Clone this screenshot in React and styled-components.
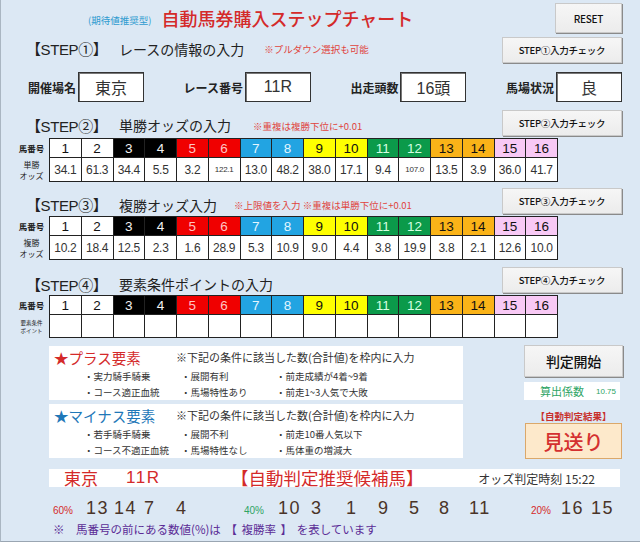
import React from "react";
import styled, { createGlobalStyle } from "styled-components";

const JP = `"Noto Sans CJK JP", "Noto Sans", sans-serif`;
const NUM = `"Liberation Sans", Arial, "Noto Sans CJK JP", sans-serif`;

const GlobalStyle = createGlobalStyle`
  html, body { margin: 0; padding: 0; background: #dce8f4; }
  * { box-sizing: border-box; }
`;

const FRAMES = {
  white: { bg: "#ffffff", fg: "#111111" },
  black: { bg: "#000000", fg: "#f2f2f2" },
  red: { bg: "#f00000", fg: "#ffc4c4" },
  blue: { bg: "#22a4e2", fg: "#e4f6ff" },
  yellow: { bg: "#ffff00", fg: "#111111" },
  green: { bg: "#0b9a4a", fg: "#d6ffe2" },
  orange: { bg: "#fab318", fg: "#111111" },
  pink: { bg: "#f8c9f5", fg: "#111111" },
};
const frameOf = ["white", "black", "red", "blue", "yellow", "green", "orange", "pink"];
const horses = Array.from({ length: 16 }, (_, i) => ({ no: i + 1, frame: frameOf[Math.floor(i / 2)] }));

const winOdds = ["34.1", "61.3", "34.4", "5.5", "3.2", "122.1", "13.0", "48.2", "38.0", "17.1", "9.4", "107.0", "13.5", "3.9", "36.0", "41.7"];
const placeOdds = ["10.2", "18.4", "12.5", "2.3", "1.6", "28.9", "5.3", "10.9", "9.0", "4.4", "3.8", "19.9", "3.8", "2.1", "12.6", "10.0"];

const Page = styled.div`
  width: 640px;
  height: 542px;
  background: #dce8f4;
  border-left: 1px solid #aab6c2;
  border-bottom: 1px solid #9aa6b2;
  font-family: ${JP};
  color: #222;
  overflow: hidden;
`;

const Header = styled.div`
  display: flex;
  align-items: center;
  height: 30px;
  margin-top: 3px;
  padding: 0 18px 0 87px;
`;

const SubTitle = styled.span`
  font-size: 9.5px;
  color: #2f9bd0;
  margin-right: 10px;
  margin-top: 3px;
`;

const Title = styled.h1`
  margin: 0;
  font-size: 18px;
  font-weight: 500;
  color: #d42a2a;
  flex: 1;
`;

const Button = styled.button`
  width: ${(p) => p.$w || 120}px;
  height: ${(p) => p.$h || 26}px;
  flex-shrink: 0;
  background: linear-gradient(#f6f6f6, #ececec);
  border: 1px solid #c9c9c9;
  box-shadow: 1px 1px 0 #8a8a8a;
  font-family: ${JP};
  font-size: ${(p) => p.$fs || 9.5}px;
  font-weight: ${(p) => p.$fw || 500};
  color: #111;
  padding: 0;
  letter-spacing: -0.3px;
`;

const StepHead = styled.div`
  display: flex;
  align-items: center;
  height: ${(p) => p.$h}px;
  margin-top: ${(p) => p.$mt}px;
  padding: 0 18px 0 25px;
`;

const StepLabel = styled.span`
  width: 93px;
  font-size: 15px;
  font-family: ${NUM};
  letter-spacing: -0.4px;
  margin-top: ${(p) => p.$off || 0}px;
`;

const StepTitle = styled.span`
  font-size: 14px;
  margin-top: ${(p) => p.$off || 0}px;
`;

const StepNote = styled.span`
  font-size: 9.5px;
  color: #e0443c;
  margin-left: ${(p) => p.$ml}px;
  margin-top: ${(p) => (p.$off || 0) + 1}px;
  flex: 1;
`;

const InputRow = styled.div`
  display: flex;
  justify-content: space-between;
  align-items: center;
  height: 30px;
  margin-top: 9px;
  padding: 0 18px 0 27px;
`;

const Field = styled.div`
  display: flex;
  align-items: center;
  gap: 2px;
`;

const FieldLabel = styled.span`
  font-size: 12px;
  font-weight: 700;
  color: #222;
`;

const ValueBox = styled.div`
  width: 66px;
  height: 30px;
  background: #fff;
  border: 1px solid #333;
  box-shadow: inset 1px 1px 0 #777;
  display: flex;
  align-items: center;
  justify-content: center;
  font-size: 16px;
  font-family: ${NUM};
  color: #333;
`;

const TableWrap = styled.div`
  display: flex;
  margin-top: ${(p) => p.$mt}px;
  padding-left: 15px;
`;

const LabelCol = styled.div`
  width: 33px;
  padding-right: 2px;
  display: grid;
  grid-template-rows: 20px ${(p) => p.$rh}px;
`;

const RowLabel = styled.div`
  display: flex;
  flex-direction: column;
  align-items: center;
  justify-content: center;
  text-align: center;
  font-size: ${(p) => p.$fs || 8}px;
  font-weight: ${(p) => p.$fw || 400};
  line-height: ${(p) => p.$lh || 11}px;
  color: #222;
  white-space: nowrap;
`;

const Grid = styled.div`
  width: 509px;
  display: grid;
  grid-template-columns: repeat(16, 1fr);
  grid-template-rows: 19px ${(p) => p.$rh}px;
  border-left: 1px solid #222;
  border-top: 1px solid #222;
`;

const NumCell = styled.div`
  background: ${(p) => FRAMES[p.$frame].bg};
  color: ${(p) => FRAMES[p.$frame].fg};
  border-right: 1px solid #222;
  border-bottom: 1px solid #222;
  display: flex;
  align-items: center;
  justify-content: center;
  font-family: ${NUM};
  font-size: 13.5px;
`;

const OddsCell = styled.div`
  background: #fff;
  border-right: 1px solid #222;
  border-bottom: 1px solid #222;
  display: flex;
  align-items: center;
  justify-content: center;
  font-family: ${NUM};
  font-size: ${(p) => (p.$small ? 8 : 12)}px;
  color: #333;
  letter-spacing: -0.3px;
`;

const Lower = styled.div`
  display: flex;
  margin-top: 7px;
  padding: 0 17px 0 48px;
  justify-content: space-between;
`;

const Panels = styled.div`
  display: flex;
  flex-direction: column;
  gap: 4px;
  padding-top: 1px;
`;

const Panel = styled.div`
  width: 414px;
  height: 54px;
  background: #fff;
  padding: 1px 0 0 5px;
`;

const PanelHead = styled.div`
  display: flex;
  align-items: center;
  height: 20px;
`;

const PanelTitle = styled.span`
  width: 122px;
  font-size: 14.5px;
  color: ${(p) => p.$color};
`;

const PanelNote = styled.span`
  font-size: 11px;
  color: #333;
`;

const ItemGrid = styled.div`
  display: grid;
  grid-template-columns: 97px 95px 1fr;
  grid-auto-rows: 16px;
  padding-left: 30px;
  margin-top: 1px;
`;

const Item = styled.span`
  font-size: 9.5px;
  color: #333;
  display: flex;
  align-items: center;
`;

const Side = styled.div`
  width: 99px;
  display: flex;
  flex-direction: column;
  align-items: flex-start;
`;

const CoefBox = styled.div`
  width: 96px;
  height: 18px;
  margin-top: 5px;
  background: #fff;
  display: flex;
  align-items: center;
  padding-left: 16px;
  gap: 12px;
  color: #2ea464;
`;

const CoefLabel = styled.span`
  font-size: 11px;
`;

const CoefValue = styled.span`
  font-size: 8px;
  font-family: ${NUM};
`;

const ResultLabel = styled.div`
  width: 100%;
  text-align: center;
  font-size: 9.5px;
  font-weight: 700;
  color: #c8302c;
  margin-top: 10px;
  line-height: 12px;
`;

const ResultBox = styled.div`
  width: 97px;
  height: 36px;
  margin-top: 1px;
  margin-left: 1px;
  background: #fde9cb;
  border: 1px solid #dba86a;
  display: flex;
  align-items: center;
  justify-content: center;
  font-size: 20px;
  font-weight: 500;
  color: #d43030;
`;

const Banner = styled.div`
  display: flex;
  align-items: center;
  height: 18px;
  margin: 10px 20px 0 48px;
  background: #fff;
  padding-left: 15px;
`;

const BannerRed = styled.span`
  font-size: ${(p) => p.$fs}px;
  color: #d42a2a;
  font-family: ${(p) => (p.$num ? NUM : JP)};
  width: ${(p) => (p.$w ? `${p.$w}px` : "auto")};
  line-height: 18px;
  letter-spacing: ${(p) => (p.$num ? "1.5px" : "0")};
`;

const BannerTime = styled.span`
  margin-left: auto;
  margin-right: 25px;
  font-size: 12px;
  color: #333;
`;

const Picks = styled.div`
  display: flex;
  align-items: baseline;
  height: 22px;
  line-height: 22px;
  margin-top: 10px;
  padding-left: 52px;
`;

const Rate = styled.span`
  font-family: ${NUM};
  font-size: 10px;
  color: ${(p) => p.$color};
  width: ${(p) => p.$w}px;
`;

const Pick = styled.span`
  font-family: ${NUM};
  font-size: 18px;
  letter-spacing: 1.5px;
  color: #4a3428;
  width: ${(p) => p.$w || 31.5}px;
`;

const Note = styled.div`
  font-size: 11.5px;
  color: #5b2c96;
  padding-left: 52px;
  margin-top: 2px;
  line-height: 16px;
  word-spacing: 2px;
`;

const OddsTable = ({ mt, rh, label, values, tinyLabel }) => (
  <TableWrap $mt={mt}>
    <LabelCol $rh={rh}>
      <RowLabel $fs={8.5} $fw={700}>馬番号</RowLabel>
      <RowLabel $fs={tinyLabel ? 5.5 : 8} $lh={tinyLabel ? 8 : 11}>
        {label.map((line) => (
          <span key={line}>{line}</span>
        ))}
      </RowLabel>
    </LabelCol>
    <Grid $rh={rh}>
      {horses.map((h) => (
        <NumCell key={`n${h.no}`} $frame={h.frame}>
          {h.no}
        </NumCell>
      ))}
      {horses.map((h, i) => (
        <OddsCell key={`o${h.no}`} $small={values && values[i].length > 4}>
          {values ? values[i] : ""}
        </OddsCell>
      ))}
    </Grid>
  </TableWrap>
);

const App = () => {
  return (
    <Page>
      <GlobalStyle />
      <Header>
        <SubTitle>(期待値推奨型)</SubTitle>
        <Title>自動馬券購入ステップチャート</Title>
        <Button $w={67} $h={30} $fs={10}>RESET</Button>
      </Header>

      <StepHead $mt={4} $h={26}>
        <StepLabel $off={-3}>【STEP①】</StepLabel>
        <StepTitle $off={-3}>レースの情報の入力</StepTitle>
        <StepNote $ml={20} $off={-3}>※プルダウン選択も可能</StepNote>
        <Button>STEP①入力チェック</Button>
      </StepHead>

      <InputRow>
        <Field>
          <FieldLabel>開催場名</FieldLabel>
          <ValueBox>東京</ValueBox>
        </Field>
        <Field>
          <FieldLabel>レース番号</FieldLabel>
          <ValueBox>11R</ValueBox>
        </Field>
        <Field>
          <FieldLabel>出走頭数</FieldLabel>
          <ValueBox>16頭</ValueBox>
        </Field>
        <Field>
          <FieldLabel>馬場状況</FieldLabel>
          <ValueBox>良</ValueBox>
        </Field>
      </InputRow>

      <StepHead $mt={8} $h={26}>
        <StepLabel $off={4}>【STEP②】</StepLabel>
        <StepTitle $off={4}>単勝オッズの入力</StepTitle>
        <StepNote $ml={22} $off={4}>※重複は複勝下位に+0.01</StepNote>
        <Button>STEP②入力チェック</Button>
      </StepHead>
      <OddsTable mt={2} rh={24} label={["単勝", "オッズ"]} values={winOdds} />

      <StepHead $mt={7} $h={24}>
        <StepLabel $off={7}>【STEP③】</StepLabel>
        <StepTitle $off={7}>複勝オッズ入力</StepTitle>
        <StepNote $ml={17} $off={7}>※上限値を入力 ※重複は単勝下位に+0.01</StepNote>
        <Button>STEP③入力チェック</Button>
      </StepHead>
      <OddsTable mt={3} rh={24} label={["複勝", "オッズ"]} values={placeOdds} />

      <StepHead $mt={6} $h={27}>
        <StepLabel $off={9}>【STEP④】</StepLabel>
        <StepTitle $off={9}>要素条件ポイントの入力</StepTitle>
        <StepNote $ml={0} />
        <Button>STEP④入力チェック</Button>
      </StepHead>
      <OddsTable mt={2} rh={23} label={["要素条件", "ポイント"]} tinyLabel />

      <Lower>
        <Panels>
          <Panel>
            <PanelHead>
              <PanelTitle $color="#d42a2a">★プラス要素</PanelTitle>
              <PanelNote>※下記の条件に該当した数(合計値)を枠内に入力</PanelNote>
            </PanelHead>
            <ItemGrid>
              <Item>・実力騎手騎乗</Item>
              <Item>・展開有利</Item>
              <Item>・前走成績が4着~9着</Item>
              <Item>・コース適正血統</Item>
              <Item>・馬場特性あり</Item>
              <Item>・前走1~3人気で大敗</Item>
            </ItemGrid>
          </Panel>
          <Panel>
            <PanelHead>
              <PanelTitle $color="#1f78b8">★マイナス要素</PanelTitle>
              <PanelNote>※下記の条件に該当した数(合計値)を枠内に入力</PanelNote>
            </PanelHead>
            <ItemGrid>
              <Item>・若手騎手騎乗</Item>
              <Item>・展開不利</Item>
              <Item>・前走10番人気以下</Item>
              <Item>・コース不適正血統</Item>
              <Item>・馬場特性なし</Item>
              <Item>・馬体重の増減大</Item>
            </ItemGrid>
          </Panel>
        </Panels>
        <Side>
          <Button $w={99} $h={32} $fs={14}>判定開始</Button>
          <CoefBox>
            <CoefLabel>算出係数</CoefLabel>
            <CoefValue>10.75</CoefValue>
          </CoefBox>
          <ResultLabel>【自動判定結果】</ResultLabel>
          <ResultBox>見送り</ResultBox>
        </Side>
      </Lower>

      <Banner>
        <BannerRed $fs={17} $w={62}>東京</BannerRed>
        <BannerRed $fs={17} $num $w={105}>11R</BannerRed>
        <BannerRed $fs={17.5}>【自動判定推奨候補馬】</BannerRed>
        <BannerTime>オッズ判定時刻 15:22</BannerTime>
      </Banner>

      <Picks>
        <Rate $color="#d42a2a" $w={33}>60%</Rate>
        <Pick $w={28}>13</Pick>
        <Pick $w={30}>14</Pick>
        <Pick $w={32}>7</Pick>
        <Pick $w={68}>4</Pick>
        <Rate $color="#2ea464" $w={34}>40%</Rate>
        <Pick $w={33}>10</Pick>
        <Pick $w={35}>3</Pick>
        <Pick $w={32}>1</Pick>
        <Pick $w={31}>9</Pick>
        <Pick $w={30}>5</Pick>
        <Pick $w={30}>8</Pick>
        <Pick $w={62}>11</Pick>
        <Rate $color="#d42a2a" $w={30}>20%</Rate>
        <Pick $w={30}>16</Pick>
        <Pick $w={30}>15</Pick>
      </Picks>

      <Note>※　馬番号の前にある数値(%)は 【 複勝率 】 を表しています</Note>
    </Page>
  );
};

export default App;
